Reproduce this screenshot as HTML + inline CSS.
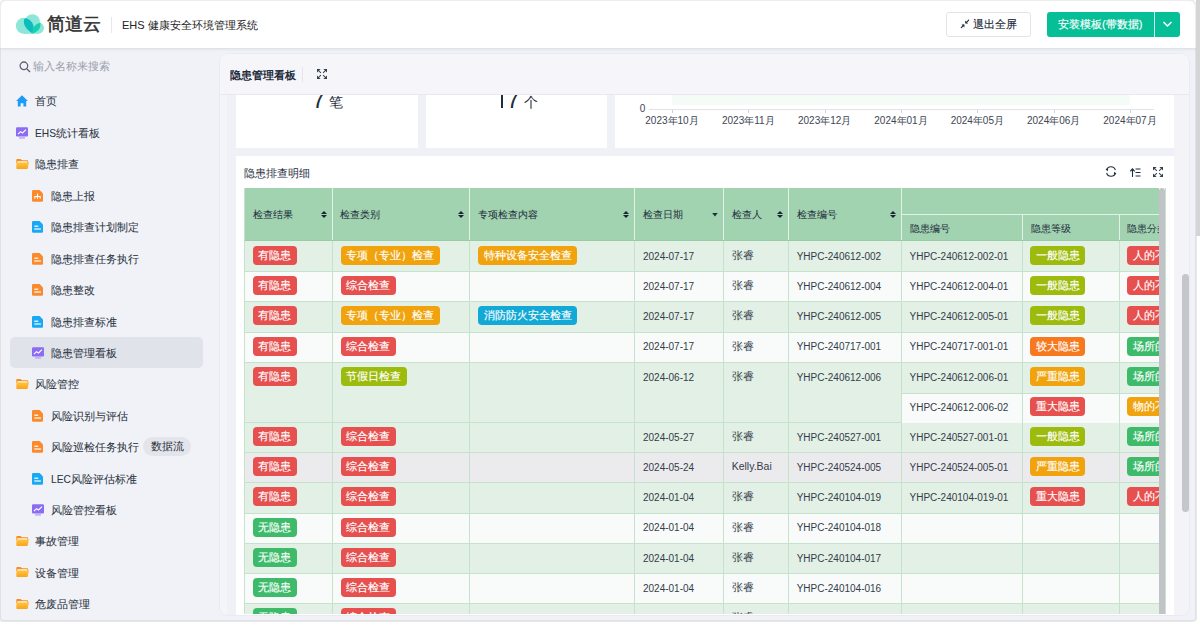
<!DOCTYPE html>
<html><head><meta charset="utf-8">
<style>
*{box-sizing:border-box;margin:0;padding:0}
html,body{width:1200px;height:624px;overflow:hidden;background:#fff;font-family:"Liberation Sans",sans-serif;color:#1f2d3d}
#win{position:absolute;left:0;top:0;width:1196px;height:620.7px;background:#f1f2f7;border-radius:6px 7px 3px 3px;overflow:hidden;box-shadow:0 0 0 1px #e9e9ec}
#pagebar{position:absolute;left:1196px;top:0;width:4px;height:236px;background:#d5d5d7}
#hdr{position:absolute;left:0;top:0;width:1197px;height:48px;background:#fff;box-shadow:0 1px 3px rgba(0,0,0,.1);z-index:2}
.abs{position:absolute}
#side .it{position:absolute;left:0;height:31px;width:210px;font-size:12px;line-height:31px;color:#1f2d3d;white-space:nowrap}
#side .it.top span.t{position:absolute;left:35px}
#side .it.sub span.t{position:absolute;left:51px}
#side .lbl{font-size:11px;line-height:18px;color:#2b3442;white-space:nowrap;-webkit-text-stroke:0.05px #2b3442}
.card{background:#fff}
.th{font-size:10px;line-height:14px;color:#253040;white-space:nowrap;-webkit-text-stroke:0.05px #253040}
.td{font-size:10px;line-height:13px;color:#343c49;white-space:nowrap}
.tdc{font-size:10.5px}
.tag{height:19px;line-height:19px;padding:0 5.5px;border-radius:4px;color:#fff;font-size:11px;white-space:nowrap;-webkit-text-stroke:0.15px #fff}
.sorti{width:6px;height:7.6px}.sorti::before{content:"";position:absolute;left:0;top:0;border-left:3px solid transparent;border-right:3px solid transparent;border-bottom:3.5px solid #1a2535}.sorti::after{content:"";position:absolute;left:0;top:4.1px;border-left:3px solid transparent;border-right:3px solid transparent;border-top:3.5px solid #1a2535}
.sortd{width:5.5px;height:3.6px;background:#1f2d3d;clip-path:polygon(0 0,100% 0,50% 100%)}
#main{position:absolute;left:220px;top:54px;width:969px;height:560.5px;background:#f4f5f9;border-radius:8px;overflow:hidden;box-shadow:0 0 0 1px #eaebf0}
</style></head><body>
<div id="win">
  <div id="hdr">
    <svg class="abs" style="left:0;top:0" width="50" height="40" viewBox="0 0 50 40">
      <g fill="#8de7d9"><circle cx="23.8" cy="25.8" r="8"/><circle cx="32.4" cy="21.9" r="7.6"/><circle cx="38.2" cy="28" r="5.8"/><rect x="23.8" y="24" width="14.4" height="9.8"/></g>
      <path d="M32.3 33.6 C28 30.5 23.8 26.8 23.8 21.8 C23.8 19.8 24.5 18.4 25.6 18 C30.5 19.6 33.6 23.2 33.6 27.4 C33.6 29.8 33 31.8 32.3 33.6 Z" fill="#0dbdbd"/>
      <path d="M32.3 33.6 C32.3 27.8 35.2 23.6 40.4 22.8 C41.2 28.6 37.6 32.2 32.3 33.6 Z" fill="#16d1b0"/>
    </svg>
    <div class="abs" style="left:46.5px;top:11.7px;font-size:18px;line-height:24px;color:#333;-webkit-text-stroke:0.55px #333">简道云</div>
    <div class="abs" style="left:111px;top:17px;width:1px;height:16px;background:#e8e8e8"></div>
    <div class="abs" style="left:122px;top:16.5px;font-size:11px;line-height:16px;color:#222">EHS 健康安全环境管理系统</div>
    <div class="abs" style="left:946px;top:12px;width:85px;height:25px;border:1px solid #e3e4e8;border-radius:3px;background:#fff"></div>
    <svg class="abs" style="left:958px;top:16px" width="14" height="14" viewBox="958 16 14 14"><path d="M968.7 20.2 L966.3 22.6 M961.3 27.6 L963.7 25.2" stroke="#1f2d3d" stroke-width="1.2" stroke-linecap="round"/><path d="M965.2 20.5 L965.2 23.4 L968.1 23.4 Z M964.4 27.5 L964.4 24.6 L961.5 24.6 Z" fill="#1f2d3d"/></svg>
    <div class="abs" style="left:973px;top:16px;font-size:11px;line-height:17px;color:#1f2d3d;-webkit-text-stroke:0.15px #1f2d3d">退出全屏</div>
    <div class="abs" style="left:1047px;top:12px;width:133px;height:25px;background:#07bf97;border-radius:3px"></div>
    <div class="abs" style="left:1154px;top:12px;width:1px;height:25px;background:#fff;opacity:.8"></div>
    <div class="abs" style="left:1058px;top:16px;font-size:11px;line-height:17px;color:#fff;-webkit-text-stroke:0.15px #fff">安装模板(带数据)</div>
    <svg class="abs" style="left:1162px;top:20px" width="11" height="8" viewBox="0 0 11 8"><path d="M1.5 2 L5.5 6 L9.5 2" stroke="#fff" stroke-width="1.5" fill="none"/></svg>
  </div>
  <div id="side">
<svg class="abs" style="left:18.5px;top:60.6px" width="12" height="12" viewBox="0 0 12 12"><circle cx="4.9" cy="4.8" r="3.8" stroke="#5e6675" stroke-width="1.3" fill="none"/><path d="M8 8 L11 11" stroke="#5e6675" stroke-width="1.4"/></svg><div class="abs" style="left:33px;top:57px;font-size:11px;line-height:18px;color:#9aa0ab">输入名称来搜索</div>
<svg class="abs" style="left:16px;top:95px" width="12" height="12" viewBox="0 0 12 12"><path d="M6 0.3 L11.9 5.9 L10.2 5.9 L10.2 11.6 L7.4 11.6 L7.4 8.2 L4.6 8.2 L4.6 11.6 L1.8 11.6 L1.8 5.9 L0.1 5.9 Z" fill="#1c9bf7"/></svg><div class="abs lbl" style="left:35px;top:92px">首页</div>
<svg class="abs" style="left:16px;top:126.5px" width="12" height="12" viewBox="0 0 12 12"><rect x="0" y="0.3" width="12" height="9.2" rx="1.2" fill="#8b6cf2"/><rect x="3" y="10.1" width="6" height="1.6" rx=".5" fill="#c3b3f8"/><path d="M2 7.2 L4.5 4.6 L6.5 6 L10 2.6" stroke="#fff" stroke-width="1.1" fill="none"/></svg><div class="abs lbl" style="left:35px;top:123.5px"><span style="font-size:10.2px">EHS</span>统计看板</div>
<svg class="abs" style="left:16px;top:158.8px" width="13" height="11" viewBox="0 0 13 11"><defs><linearGradient id="fg" x1="0" y1="0" x2="0" y2="1"><stop offset="0" stop-color="#fec53d"/><stop offset="1" stop-color="#f8a51b"/></linearGradient></defs><path d="M0.3 1 Q0.3 0 1.3 0 L4.6 0 L5.9 1.2 L11.2 1.2 Q12.2 1.2 12.2 2.2 L12.2 4 L0.3 4 Z" fill="#f98c1f"/><rect x="1.2" y="2.2" width="10.2" height="2" fill="#fff4dc"/><path d="M1.6 3.6 L12.8 3.6 L11.8 9.2 Q11.6 10 10.8 10 L1.2 10 Q0.3 10 0.3 9.1 L0.3 4.6 Z" fill="url(#fg)"/></svg><div class="abs lbl" style="left:35px;top:155px">隐患排查</div>
<svg class="abs" style="left:32px;top:189.5px" width="11" height="12" viewBox="0 0 11 12"><path d="M1.2 0 L7.6 0 L11 3.4 L11 10.6 Q11 11.8 9.8 11.8 L1.2 11.8 Q0 11.8 0 10.6 L0 1.2 Q0 0 1.2 0 Z" fill="#fb8a2c"/><path d="M5.5 3.5 V6.2 M2.8 8.8 V6.5 H8.2 V8.8 M5.5 6.5 V8.8" stroke="#fff" stroke-width="1.1" fill="none"/></svg><div class="abs lbl" style="left:51px;top:186.5px">隐患上报</div>
<svg class="abs" style="left:32px;top:221px" width="11" height="12" viewBox="0 0 11 12"><path d="M1.2 0 L7.6 0 L11 3.4 L11 10.6 Q11 11.8 9.8 11.8 L1.2 11.8 Q0 11.8 0 10.6 L0 1.2 Q0 0 1.2 0 Z" fill="#19a8f6"/><rect x="2.3" y="4.6" width="4" height="1.2" fill="#fff"/><rect x="2.3" y="7.4" width="6.6" height="1.2" fill="#fff"/></svg><div class="abs lbl" style="left:51px;top:218px">隐患排查计划制定</div>
<svg class="abs" style="left:32px;top:252.5px" width="11" height="12" viewBox="0 0 11 12"><path d="M1.2 0 L7.6 0 L11 3.4 L11 10.6 Q11 11.8 9.8 11.8 L1.2 11.8 Q0 11.8 0 10.6 L0 1.2 Q0 0 1.2 0 Z" fill="#fb8a2c"/><rect x="2.3" y="4.6" width="4" height="1.2" fill="#fff"/><rect x="2.3" y="7.4" width="6.6" height="1.2" fill="#fff"/></svg><div class="abs lbl" style="left:51px;top:249.5px">隐患排查任务执行</div>
<svg class="abs" style="left:32px;top:284px" width="11" height="12" viewBox="0 0 11 12"><path d="M1.2 0 L7.6 0 L11 3.4 L11 10.6 Q11 11.8 9.8 11.8 L1.2 11.8 Q0 11.8 0 10.6 L0 1.2 Q0 0 1.2 0 Z" fill="#fb8a2c"/><rect x="2.3" y="4.6" width="4" height="1.2" fill="#fff"/><rect x="2.3" y="7.4" width="6.6" height="1.2" fill="#fff"/></svg><div class="abs lbl" style="left:51px;top:281px">隐患整改</div>
<svg class="abs" style="left:32px;top:315.5px" width="11" height="12" viewBox="0 0 11 12"><path d="M1.2 0 L7.6 0 L11 3.4 L11 10.6 Q11 11.8 9.8 11.8 L1.2 11.8 Q0 11.8 0 10.6 L0 1.2 Q0 0 1.2 0 Z" fill="#19a8f6"/><rect x="2.3" y="4.6" width="4" height="1.2" fill="#fff"/><rect x="2.3" y="7.4" width="6.6" height="1.2" fill="#fff"/></svg><div class="abs lbl" style="left:51px;top:312.5px">隐患排查标准</div>
<div class="abs" style="left:10px;top:337px;width:193px;height:31px;background:#e1e3eb;border-radius:5px"></div><svg class="abs" style="left:32px;top:346.5px" width="12" height="12" viewBox="0 0 12 12"><rect x="0" y="0.3" width="12" height="9.2" rx="1.2" fill="#8b6cf2"/><rect x="3" y="10.1" width="6" height="1.6" rx=".5" fill="#c3b3f8"/><path d="M2 7.2 L4.5 4.6 L6.5 6 L10 2.6" stroke="#fff" stroke-width="1.1" fill="none"/></svg><div class="abs lbl" style="left:51px;top:343.5px">隐患管理看板</div>
<svg class="abs" style="left:16px;top:378.8px" width="13" height="11" viewBox="0 0 13 11"><defs><linearGradient id="fg" x1="0" y1="0" x2="0" y2="1"><stop offset="0" stop-color="#fec53d"/><stop offset="1" stop-color="#f8a51b"/></linearGradient></defs><path d="M0.3 1 Q0.3 0 1.3 0 L4.6 0 L5.9 1.2 L11.2 1.2 Q12.2 1.2 12.2 2.2 L12.2 4 L0.3 4 Z" fill="#f98c1f"/><rect x="1.2" y="2.2" width="10.2" height="2" fill="#fff4dc"/><path d="M1.6 3.6 L12.8 3.6 L11.8 9.2 Q11.6 10 10.8 10 L1.2 10 Q0.3 10 0.3 9.1 L0.3 4.6 Z" fill="url(#fg)"/></svg><div class="abs lbl" style="left:35px;top:375px">风险管控</div>
<svg class="abs" style="left:32px;top:409.5px" width="11" height="12" viewBox="0 0 11 12"><path d="M1.2 0 L7.6 0 L11 3.4 L11 10.6 Q11 11.8 9.8 11.8 L1.2 11.8 Q0 11.8 0 10.6 L0 1.2 Q0 0 1.2 0 Z" fill="#fb8a2c"/><rect x="2.3" y="4.6" width="4" height="1.2" fill="#fff"/><rect x="2.3" y="7.4" width="6.6" height="1.2" fill="#fff"/></svg><div class="abs lbl" style="left:51px;top:406.5px">风险识别与评估</div>
<svg class="abs" style="left:32px;top:441px" width="11" height="12" viewBox="0 0 11 12"><path d="M1.2 0 L7.6 0 L11 3.4 L11 10.6 Q11 11.8 9.8 11.8 L1.2 11.8 Q0 11.8 0 10.6 L0 1.2 Q0 0 1.2 0 Z" fill="#fb8a2c"/><rect x="2.3" y="4.6" width="4" height="1.2" fill="#fff"/><rect x="2.3" y="7.4" width="6.6" height="1.2" fill="#fff"/></svg><div class="abs lbl" style="left:51px;top:438px">风险巡检任务执行</div><div class="abs" style="left:143.3px;top:437.4px;width:48.2px;height:19px;border-radius:9.5px;background:#e4e5ea;font-size:11px;line-height:19px;text-align:center;color:#1f2d3d">数据流</div>
<svg class="abs" style="left:32px;top:472.5px" width="11" height="12" viewBox="0 0 11 12"><path d="M1.2 0 L7.6 0 L11 3.4 L11 10.6 Q11 11.8 9.8 11.8 L1.2 11.8 Q0 11.8 0 10.6 L0 1.2 Q0 0 1.2 0 Z" fill="#19a8f6"/><rect x="2.3" y="4.6" width="4" height="1.2" fill="#fff"/><rect x="2.3" y="7.4" width="6.6" height="1.2" fill="#fff"/></svg><div class="abs lbl" style="left:51px;top:469.5px"><span style="font-size:10.2px">LEC</span>风险评估标准</div>
<svg class="abs" style="left:32px;top:504px" width="12" height="12" viewBox="0 0 12 12"><rect x="0" y="0.3" width="12" height="9.2" rx="1.2" fill="#8b6cf2"/><rect x="3" y="10.1" width="6" height="1.6" rx=".5" fill="#c3b3f8"/><path d="M2 7.2 L4.5 4.6 L6.5 6 L10 2.6" stroke="#fff" stroke-width="1.1" fill="none"/></svg><div class="abs lbl" style="left:51px;top:501px">风险管控看板</div>
<svg class="abs" style="left:16px;top:535.8px" width="13" height="11" viewBox="0 0 13 11"><defs><linearGradient id="fg" x1="0" y1="0" x2="0" y2="1"><stop offset="0" stop-color="#fec53d"/><stop offset="1" stop-color="#f8a51b"/></linearGradient></defs><path d="M0.3 1 Q0.3 0 1.3 0 L4.6 0 L5.9 1.2 L11.2 1.2 Q12.2 1.2 12.2 2.2 L12.2 4 L0.3 4 Z" fill="#f98c1f"/><rect x="1.2" y="2.2" width="10.2" height="2" fill="#fff4dc"/><path d="M1.6 3.6 L12.8 3.6 L11.8 9.2 Q11.6 10 10.8 10 L1.2 10 Q0.3 10 0.3 9.1 L0.3 4.6 Z" fill="url(#fg)"/></svg><div class="abs lbl" style="left:35px;top:532px">事故管理</div>
<svg class="abs" style="left:16px;top:567.3px" width="13" height="11" viewBox="0 0 13 11"><defs><linearGradient id="fg" x1="0" y1="0" x2="0" y2="1"><stop offset="0" stop-color="#fec53d"/><stop offset="1" stop-color="#f8a51b"/></linearGradient></defs><path d="M0.3 1 Q0.3 0 1.3 0 L4.6 0 L5.9 1.2 L11.2 1.2 Q12.2 1.2 12.2 2.2 L12.2 4 L0.3 4 Z" fill="#f98c1f"/><rect x="1.2" y="2.2" width="10.2" height="2" fill="#fff4dc"/><path d="M1.6 3.6 L12.8 3.6 L11.8 9.2 Q11.6 10 10.8 10 L1.2 10 Q0.3 10 0.3 9.1 L0.3 4.6 Z" fill="url(#fg)"/></svg><div class="abs lbl" style="left:35px;top:563.5px">设备管理</div>
<svg class="abs" style="left:16px;top:598.8px" width="13" height="11" viewBox="0 0 13 11"><defs><linearGradient id="fg" x1="0" y1="0" x2="0" y2="1"><stop offset="0" stop-color="#fec53d"/><stop offset="1" stop-color="#f8a51b"/></linearGradient></defs><path d="M0.3 1 Q0.3 0 1.3 0 L4.6 0 L5.9 1.2 L11.2 1.2 Q12.2 1.2 12.2 2.2 L12.2 4 L0.3 4 Z" fill="#f98c1f"/><rect x="1.2" y="2.2" width="10.2" height="2" fill="#fff4dc"/><path d="M1.6 3.6 L12.8 3.6 L11.8 9.2 Q11.6 10 10.8 10 L1.2 10 Q0.3 10 0.3 9.1 L0.3 4.6 Z" fill="url(#fg)"/></svg><div class="abs lbl" style="left:35px;top:595px">危废品管理</div>
<!--endside--></div>
  <div id="main">
<div class="abs" style="left:0;top:0;width:969px;height:41px;background:#f5f5fa;border-bottom:1px solid #e8e9ef"></div>
<div class="abs" style="left:10px;top:12px;font-size:11px;line-height:18px;font-weight:bold;color:#1f2d3d">隐患管理看板</div>
<div class="abs" style="left:82px;top:13px;width:1px;height:15px;background:#e3e4ea"></div>
<svg class="abs" style="left:96.8px;top:14.8px" width="10" height="10" viewBox="0 0 10 10"><path d="M0 0 H3.6 L0 3.6 Z M10 0 H6.4 L10 3.6 Z M0 10 V6.4 L3.6 10 Z M10 10 V6.4 L6.4 10 Z" fill="#343e4c"/><path d="M1 1 L3.9 3.9 M9 1 L6.1 3.9 M1 9 L3.9 6.1 M9 9 L6.1 6.1" stroke="#343e4c" stroke-width="1.05"/></svg>
<div class="abs" style="left:7px;top:41px;width:962px;height:519.5px;background:#f0f1f6;overflow:hidden">
<div class="abs card" style="left:9px;top:-20px;width:182px;height:73px"></div>
<div class="abs card" style="left:198.5px;top:-20px;width:181.5px;height:73px"></div>
<div class="abs card" style="left:387.6px;top:-20px;width:559.4px;height:73px"></div>
<div class="abs" style="left:85px;top:-10.5px;width:50px;height:30px;font-size:24px;line-height:30px;color:#1f2d3d;white-space:nowrap">7<span style="font-size:14px;position:relative;top:-0.5px;left:4px">笔</span></div>
<div class="abs" style="left:273.6px;top:0;width:2.3px;height:12.599999999999994px;background:#1f2d3d"></div><div class="abs" style="left:279.5px;top:-10.5px;width:60px;height:30px;font-size:24px;line-height:30px;color:#1f2d3d;white-space:nowrap">7<span style="font-size:14px;position:relative;top:-0.5px;left:4px">个</span></div>
<div class="abs" style="left:445px;top:0;width:458px;height:9.5px;background:#f5fbf6"></div>
<div class="abs" style="left:422px;top:14px;width:505px;height:1px;background:#e0e3e8"></div>
<div class="abs" style="left:412.7px;top:8px;font-size:10px;line-height:12px;color:#3e4552">0</div>
<div class="abs" style="left:445.0px;top:15px;width:1px;height:3px;background:#d0d3d8"></div>
<div class="abs" style="left:405.0px;top:20.2px;width:80px;text-align:center;font-size:10px;line-height:12px;color:#3e4552">2023年10月</div>
<div class="abs" style="left:521.33px;top:15px;width:1px;height:3px;background:#d0d3d8"></div>
<div class="abs" style="left:481.33px;top:20.2px;width:80px;text-align:center;font-size:10px;line-height:12px;color:#3e4552">2023年11月</div>
<div class="abs" style="left:597.66px;top:15px;width:1px;height:3px;background:#d0d3d8"></div>
<div class="abs" style="left:557.66px;top:20.2px;width:80px;text-align:center;font-size:10px;line-height:12px;color:#3e4552">2023年12月</div>
<div class="abs" style="left:673.99px;top:15px;width:1px;height:3px;background:#d0d3d8"></div>
<div class="abs" style="left:633.99px;top:20.2px;width:80px;text-align:center;font-size:10px;line-height:12px;color:#3e4552">2024年01月</div>
<div class="abs" style="left:750.32px;top:15px;width:1px;height:3px;background:#d0d3d8"></div>
<div class="abs" style="left:710.32px;top:20.2px;width:80px;text-align:center;font-size:10px;line-height:12px;color:#3e4552">2024年05月</div>
<div class="abs" style="left:826.65px;top:15px;width:1px;height:3px;background:#d0d3d8"></div>
<div class="abs" style="left:786.65px;top:20.2px;width:80px;text-align:center;font-size:10px;line-height:12px;color:#3e4552">2024年06月</div>
<div class="abs" style="left:902.98px;top:15px;width:1px;height:3px;background:#d0d3d8"></div>
<div class="abs" style="left:862.98px;top:20.2px;width:80px;text-align:center;font-size:10px;line-height:12px;color:#3e4552">2024年07月</div>
<div class="abs card" style="left:9px;top:61px;width:938px;height:600px"></div>
<div class="abs" style="left:17px;top:68.5px;font-size:11px;line-height:18px;color:#1f2d3d">隐患排查明细</div>
<svg class="abs" style="left:878px;top:71px" width="12" height="11" viewBox="0 0 12 11"><path d="M1.5 4.2 A4.6 4.6 0 0 1 10.4 4.2 M10.5 6.8 A4.6 4.6 0 0 1 1.6 6.8" stroke="#1f2d3d" stroke-width="1.1" fill="none"/><path d="M0.5 3 L2.8 5.2 L3.2 2.6 Z M11.5 8 L9.2 5.8 L8.8 8.4 Z" fill="#1f2d3d"/></svg>
<svg class="abs" style="left:902.5px;top:72.5px" width="11" height="9" viewBox="0 0 11 9"><path d="M2.5 9 V1.5 M0.3 3.3 L2.5 0.8 L4.7 3.3 M5.5 1 H10.5 M5.5 4.5 H10.5 M5.5 8 H10.5" stroke="#1f2d3d" stroke-width="1.1" fill="none"/></svg>
<svg class="abs" style="left:926px;top:72px" width="10" height="10" viewBox="0 0 10 10"><path d="M0 0 H3.6 L0 3.6 Z M10 0 H6.4 L10 3.6 Z M0 10 V6.4 L3.6 10 Z M10 10 V6.4 L6.4 10 Z" fill="#343e4c"/><path d="M1 1 L3.9 3.9 M9 1 L6.1 3.9 M1 9 L3.9 6.1 M9 9 L6.1 6.1" stroke="#343e4c" stroke-width="1.05"/></svg>
<div class="abs" style="left:17.2px;top:93.3px;width:914.5px;height:426.2px;overflow:hidden">
<div class="abs" style="left:0;top:0;width:1000px;height:52.69999999999999px;background:#a2d3b0;border-bottom:1px solid #97cca5"></div>
<div class="abs th" style="left:8.8px;top:19.7px">检查结果</div>
<div class="abs sorti" style="left:76.5px;top:22.4px"></div>
<div class="abs th" style="left:96.3px;top:19.7px">检查类别</div>
<div class="abs" style="left:87.8px;top:0;width:1px;height:51.69999999999999px;background:#e3f2e7"></div>
<div class="abs sorti" style="left:213.8px;top:22.4px"></div>
<div class="abs th" style="left:233.6px;top:19.7px">专项检查内容</div>
<div class="abs" style="left:225.1px;top:0;width:1px;height:51.69999999999999px;background:#e3f2e7"></div>
<div class="abs sorti" style="left:378.7px;top:22.4px"></div>
<div class="abs th" style="left:398.5px;top:19.7px">检查日期</div>
<div class="abs" style="left:390.0px;top:0;width:1px;height:51.69999999999999px;background:#e3f2e7"></div>
<div class="abs sortd" style="left:468.0px;top:24.7px"></div>
<div class="abs th" style="left:487.5px;top:19.7px">检查人</div>
<div class="abs" style="left:479.0px;top:0;width:1px;height:51.69999999999999px;background:#e3f2e7"></div>
<div class="abs sorti" style="left:532.7px;top:22.4px"></div>
<div class="abs th" style="left:552.5px;top:19.7px">检查编号</div>
<div class="abs" style="left:544.0px;top:0;width:1px;height:51.69999999999999px;background:#e3f2e7"></div>
<div class="abs sorti" style="left:645.7px;top:22.4px"></div>
<div class="abs" style="left:657.0px;top:0;width:1px;height:51.69999999999999px;background:#e3f2e7"></div>
<div class="abs" style="left:657.0px;top:25.7px;width:400px;height:1px;background:#e3f2e7"></div>
<div class="abs th" style="left:665.5px;top:33.7px">隐患编号</div>
<div class="abs" style="left:778.0px;top:25.7px;width:1px;height:26.5px;background:#e3f2e7"></div>
<div class="abs th" style="left:786.5px;top:33.7px">隐患等级</div>
<div class="abs" style="left:874.8px;top:25.7px;width:1px;height:26.5px;background:#e3f2e7"></div>
<div class="abs th" style="left:883.3px;top:33.7px">隐患分类</div>
<div class="abs" style="left:0;top:52.7px;width:1000px;height:31.269999999999982px;background:#e2f0e5;border-bottom:1px solid #c5e3cc"></div>
<div class="abs" style="left:87.8px;top:52.7px;width:1px;height:31.269999999999982px;background:#c5e3cc"></div>
<div class="abs" style="left:225.1px;top:52.7px;width:1px;height:31.269999999999982px;background:#c5e3cc"></div>
<div class="abs" style="left:390.0px;top:52.7px;width:1px;height:31.269999999999982px;background:#c5e3cc"></div>
<div class="abs" style="left:479.0px;top:52.7px;width:1px;height:31.269999999999982px;background:#c5e3cc"></div>
<div class="abs" style="left:544.0px;top:52.7px;width:1px;height:31.269999999999982px;background:#c5e3cc"></div>
<div class="abs" style="left:657.0px;top:52.7px;width:1px;height:31.269999999999982px;background:#c5e3cc"></div>
<div class="abs tag" style="left:8.5px;top:57.7px;background:#e6514f">有隐患</div>
<div class="abs tag" style="left:96.5px;top:57.7px;background:#f0a30c">专项（专业）检查</div>
<div class="abs tag" style="left:234.1px;top:57.7px;background:#f0a30c">特种设备安全检查</div>
<div class="abs td" style="left:398.8px;top:61.6px">2024-07-17</div>
<div class="abs td tdc" style="left:487.5px;top:60.7px">张睿</div>
<div class="abs td" style="left:552.5px;top:61.6px">YHPC-240612-002</div>
<div class="abs td" style="left:665.3px;top:61.6px">YHPC-240612-002-01</div>
<div class="abs tag" style="left:786.3px;top:57.7px;background:#9dbb0c">一般隐患</div>
<div class="abs tag" style="left:883.3px;top:57.7px;background:#e6514f">人的不安全行为</div>
<div class="abs" style="left:778.0px;top:52.7px;width:1px;height:31.269999999999982px;background:#c5e3cc"></div>
<div class="abs" style="left:874.8px;top:52.7px;width:1px;height:31.269999999999982px;background:#c5e3cc"></div>
<div class="abs" style="left:0;top:83.97px;width:1000px;height:30.170000000000016px;background:#f8fbf9;border-bottom:1px solid #c5e3cc"></div>
<div class="abs" style="left:87.8px;top:83.97px;width:1px;height:30.170000000000016px;background:#c5e3cc"></div>
<div class="abs" style="left:225.1px;top:83.97px;width:1px;height:30.170000000000016px;background:#c5e3cc"></div>
<div class="abs" style="left:390.0px;top:83.97px;width:1px;height:30.170000000000016px;background:#c5e3cc"></div>
<div class="abs" style="left:479.0px;top:83.97px;width:1px;height:30.170000000000016px;background:#c5e3cc"></div>
<div class="abs" style="left:544.0px;top:83.97px;width:1px;height:30.170000000000016px;background:#c5e3cc"></div>
<div class="abs" style="left:657.0px;top:83.97px;width:1px;height:30.170000000000016px;background:#c5e3cc"></div>
<div class="abs tag" style="left:8.5px;top:87.87px;background:#e6514f">有隐患</div>
<div class="abs tag" style="left:96.5px;top:87.87px;background:#e6514f">综合检查</div>
<div class="abs td" style="left:398.8px;top:91.77px">2024-07-17</div>
<div class="abs td tdc" style="left:487.5px;top:90.87px">张睿</div>
<div class="abs td" style="left:552.5px;top:91.77px">YHPC-240612-004</div>
<div class="abs td" style="left:665.3px;top:91.77px">YHPC-240612-004-01</div>
<div class="abs tag" style="left:786.3px;top:87.87px;background:#9dbb0c">一般隐患</div>
<div class="abs tag" style="left:883.3px;top:87.87px;background:#e6514f">人的不安全行为</div>
<div class="abs" style="left:778.0px;top:83.97px;width:1px;height:30.170000000000016px;background:#c5e3cc"></div>
<div class="abs" style="left:874.8px;top:83.97px;width:1px;height:30.170000000000016px;background:#c5e3cc"></div>
<div class="abs" style="left:0;top:114.14px;width:1000px;height:30.170000000000016px;background:#e2f0e5;border-bottom:1px solid #c5e3cc"></div>
<div class="abs" style="left:87.8px;top:114.14px;width:1px;height:30.170000000000016px;background:#c5e3cc"></div>
<div class="abs" style="left:225.1px;top:114.14px;width:1px;height:30.170000000000016px;background:#c5e3cc"></div>
<div class="abs" style="left:390.0px;top:114.14px;width:1px;height:30.170000000000016px;background:#c5e3cc"></div>
<div class="abs" style="left:479.0px;top:114.14px;width:1px;height:30.170000000000016px;background:#c5e3cc"></div>
<div class="abs" style="left:544.0px;top:114.14px;width:1px;height:30.170000000000016px;background:#c5e3cc"></div>
<div class="abs" style="left:657.0px;top:114.14px;width:1px;height:30.170000000000016px;background:#c5e3cc"></div>
<div class="abs tag" style="left:8.5px;top:118.04px;background:#e6514f">有隐患</div>
<div class="abs tag" style="left:96.5px;top:118.04px;background:#f0a30c">专项（专业）检查</div>
<div class="abs tag" style="left:234.1px;top:118.04px;background:#12a9d6">消防防火安全检查</div>
<div class="abs td" style="left:398.8px;top:121.94px">2024-07-17</div>
<div class="abs td tdc" style="left:487.5px;top:121.04px">张睿</div>
<div class="abs td" style="left:552.5px;top:121.94px">YHPC-240612-005</div>
<div class="abs td" style="left:665.3px;top:121.94px">YHPC-240612-005-01</div>
<div class="abs tag" style="left:786.3px;top:118.04px;background:#9dbb0c">一般隐患</div>
<div class="abs tag" style="left:883.3px;top:118.04px;background:#e6514f">人的不安全行为</div>
<div class="abs" style="left:778.0px;top:114.14px;width:1px;height:30.170000000000016px;background:#c5e3cc"></div>
<div class="abs" style="left:874.8px;top:114.14px;width:1px;height:30.170000000000016px;background:#c5e3cc"></div>
<div class="abs" style="left:0;top:144.31px;width:1000px;height:30.16999999999996px;background:#f8fbf9;border-bottom:1px solid #c5e3cc"></div>
<div class="abs" style="left:87.8px;top:144.31px;width:1px;height:30.16999999999996px;background:#c5e3cc"></div>
<div class="abs" style="left:225.1px;top:144.31px;width:1px;height:30.16999999999996px;background:#c5e3cc"></div>
<div class="abs" style="left:390.0px;top:144.31px;width:1px;height:30.16999999999996px;background:#c5e3cc"></div>
<div class="abs" style="left:479.0px;top:144.31px;width:1px;height:30.16999999999996px;background:#c5e3cc"></div>
<div class="abs" style="left:544.0px;top:144.31px;width:1px;height:30.16999999999996px;background:#c5e3cc"></div>
<div class="abs" style="left:657.0px;top:144.31px;width:1px;height:30.16999999999996px;background:#c5e3cc"></div>
<div class="abs tag" style="left:8.5px;top:148.21px;background:#e6514f">有隐患</div>
<div class="abs tag" style="left:96.5px;top:148.21px;background:#e6514f">综合检查</div>
<div class="abs td" style="left:398.8px;top:152.11px">2024-07-17</div>
<div class="abs td tdc" style="left:487.5px;top:151.21px">张睿</div>
<div class="abs td" style="left:552.5px;top:152.11px">YHPC-240717-001</div>
<div class="abs td" style="left:665.3px;top:152.11px">YHPC-240717-001-01</div>
<div class="abs tag" style="left:786.3px;top:148.21px;background:#f7791f">较大隐患</div>
<div class="abs tag" style="left:883.3px;top:148.21px;background:#3dbb6a">场所的不安全</div>
<div class="abs" style="left:778.0px;top:144.31px;width:1px;height:30.16999999999996px;background:#c5e3cc"></div>
<div class="abs" style="left:874.8px;top:144.31px;width:1px;height:30.16999999999996px;background:#c5e3cc"></div>
<div class="abs" style="left:0;top:174.48px;width:1000px;height:60.34000000000003px;background:#e2f0e5;border-bottom:1px solid #c5e3cc"></div>
<div class="abs" style="left:87.8px;top:174.48px;width:1px;height:60.34000000000003px;background:#c5e3cc"></div>
<div class="abs" style="left:225.1px;top:174.48px;width:1px;height:60.34000000000003px;background:#c5e3cc"></div>
<div class="abs" style="left:390.0px;top:174.48px;width:1px;height:60.34000000000003px;background:#c5e3cc"></div>
<div class="abs" style="left:479.0px;top:174.48px;width:1px;height:60.34000000000003px;background:#c5e3cc"></div>
<div class="abs" style="left:544.0px;top:174.48px;width:1px;height:60.34000000000003px;background:#c5e3cc"></div>
<div class="abs" style="left:657.0px;top:174.48px;width:1px;height:60.34000000000003px;background:#c5e3cc"></div>
<div class="abs tag" style="left:8.5px;top:178.38px;background:#e6514f">有隐患</div>
<div class="abs tag" style="left:96.5px;top:178.38px;background:#9dbb0c">节假日检查</div>
<div class="abs td" style="left:398.8px;top:182.28px">2024-06-12</div>
<div class="abs td tdc" style="left:487.5px;top:181.38px">张睿</div>
<div class="abs td" style="left:552.5px;top:182.28px">YHPC-240612-006</div>
<div class="abs td" style="left:665.3px;top:182.28px">YHPC-240612-006-01</div>
<div class="abs tag" style="left:786.3px;top:178.38px;background:#f0a30c">严重隐患</div>
<div class="abs tag" style="left:883.3px;top:178.38px;background:#3dbb6a">场所的不安全</div>
<div class="abs" style="left:778.0px;top:174.48px;width:1px;height:30.170000000000016px;background:#c5e3cc"></div>
<div class="abs" style="left:874.8px;top:174.48px;width:1px;height:30.170000000000016px;background:#c5e3cc"></div>
<div class="abs" style="left:657.0px;top:204.65px;width:400px;height:30.170000000000016px;background:#f8fbf9;border-top:1px solid #c5e3cc"></div>
<div class="abs" style="left:657.0px;top:204.65px;width:1px;height:30.170000000000016px;background:#c5e3cc"></div>
<div class="abs td" style="left:665.3px;top:212.45px">YHPC-240612-006-02</div>
<div class="abs tag" style="left:786.3px;top:208.55px;background:#e6514f">重大隐患</div>
<div class="abs tag" style="left:883.3px;top:208.55px;background:#f0a30c">物的不安全</div>
<div class="abs" style="left:778.0px;top:204.65px;width:1px;height:30.170000000000016px;background:#c5e3cc"></div>
<div class="abs" style="left:874.8px;top:204.65px;width:1px;height:30.170000000000016px;background:#c5e3cc"></div>
<div class="abs" style="left:0;top:234.82px;width:1000px;height:30.170000000000016px;background:#e2f0e5;border-bottom:1px solid #c5e3cc"></div>
<div class="abs" style="left:87.8px;top:234.82px;width:1px;height:30.170000000000016px;background:#c5e3cc"></div>
<div class="abs" style="left:225.1px;top:234.82px;width:1px;height:30.170000000000016px;background:#c5e3cc"></div>
<div class="abs" style="left:390.0px;top:234.82px;width:1px;height:30.170000000000016px;background:#c5e3cc"></div>
<div class="abs" style="left:479.0px;top:234.82px;width:1px;height:30.170000000000016px;background:#c5e3cc"></div>
<div class="abs" style="left:544.0px;top:234.82px;width:1px;height:30.170000000000016px;background:#c5e3cc"></div>
<div class="abs" style="left:657.0px;top:234.82px;width:1px;height:30.170000000000016px;background:#c5e3cc"></div>
<div class="abs tag" style="left:8.5px;top:238.72px;background:#e6514f">有隐患</div>
<div class="abs tag" style="left:96.5px;top:238.72px;background:#e6514f">综合检查</div>
<div class="abs td" style="left:398.8px;top:242.62px">2024-05-27</div>
<div class="abs td tdc" style="left:487.5px;top:241.72px">张睿</div>
<div class="abs td" style="left:552.5px;top:242.62px">YHPC-240527-001</div>
<div class="abs td" style="left:665.3px;top:242.62px">YHPC-240527-001-01</div>
<div class="abs tag" style="left:786.3px;top:238.72px;background:#9dbb0c">一般隐患</div>
<div class="abs tag" style="left:883.3px;top:238.72px;background:#3dbb6a">场所的不安全</div>
<div class="abs" style="left:778.0px;top:234.82px;width:1px;height:30.170000000000016px;background:#c5e3cc"></div>
<div class="abs" style="left:874.8px;top:234.82px;width:1px;height:30.170000000000016px;background:#c5e3cc"></div>
<div class="abs" style="left:0;top:264.99px;width:1000px;height:30.16999999999996px;background:#ebebee;border-bottom:1px solid #c5e3cc"></div>
<div class="abs" style="left:87.8px;top:264.99px;width:1px;height:30.16999999999996px;background:#c5e3cc"></div>
<div class="abs" style="left:225.1px;top:264.99px;width:1px;height:30.16999999999996px;background:#c5e3cc"></div>
<div class="abs" style="left:390.0px;top:264.99px;width:1px;height:30.16999999999996px;background:#c5e3cc"></div>
<div class="abs" style="left:479.0px;top:264.99px;width:1px;height:30.16999999999996px;background:#c5e3cc"></div>
<div class="abs" style="left:544.0px;top:264.99px;width:1px;height:30.16999999999996px;background:#c5e3cc"></div>
<div class="abs" style="left:657.0px;top:264.99px;width:1px;height:30.16999999999996px;background:#c5e3cc"></div>
<div class="abs tag" style="left:8.5px;top:268.89px;background:#e6514f">有隐患</div>
<div class="abs tag" style="left:96.5px;top:268.89px;background:#e6514f">综合检查</div>
<div class="abs td" style="left:398.8px;top:272.79px">2024-05-24</div>
<div class="abs td tdc" style="left:487.5px;top:271.89px">Kelly.Bai</div>
<div class="abs td" style="left:552.5px;top:272.79px">YHPC-240524-005</div>
<div class="abs td" style="left:665.3px;top:272.79px">YHPC-240524-005-01</div>
<div class="abs tag" style="left:786.3px;top:268.89px;background:#f0a30c">严重隐患</div>
<div class="abs tag" style="left:883.3px;top:268.89px;background:#3dbb6a">场所的不安全</div>
<div class="abs" style="left:778.0px;top:264.99px;width:1px;height:30.16999999999996px;background:#c5e3cc"></div>
<div class="abs" style="left:874.8px;top:264.99px;width:1px;height:30.16999999999996px;background:#c5e3cc"></div>
<div class="abs" style="left:0;top:295.16px;width:1000px;height:30.170000000000016px;background:#e2f0e5;border-bottom:1px solid #c5e3cc"></div>
<div class="abs" style="left:87.8px;top:295.16px;width:1px;height:30.170000000000016px;background:#c5e3cc"></div>
<div class="abs" style="left:225.1px;top:295.16px;width:1px;height:30.170000000000016px;background:#c5e3cc"></div>
<div class="abs" style="left:390.0px;top:295.16px;width:1px;height:30.170000000000016px;background:#c5e3cc"></div>
<div class="abs" style="left:479.0px;top:295.16px;width:1px;height:30.170000000000016px;background:#c5e3cc"></div>
<div class="abs" style="left:544.0px;top:295.16px;width:1px;height:30.170000000000016px;background:#c5e3cc"></div>
<div class="abs" style="left:657.0px;top:295.16px;width:1px;height:30.170000000000016px;background:#c5e3cc"></div>
<div class="abs tag" style="left:8.5px;top:299.06px;background:#e6514f">有隐患</div>
<div class="abs tag" style="left:96.5px;top:299.06px;background:#e6514f">综合检查</div>
<div class="abs td" style="left:398.8px;top:302.96px">2024-01-04</div>
<div class="abs td tdc" style="left:487.5px;top:302.06px">张睿</div>
<div class="abs td" style="left:552.5px;top:302.96px">YHPC-240104-019</div>
<div class="abs td" style="left:665.3px;top:302.96px">YHPC-240104-019-01</div>
<div class="abs tag" style="left:786.3px;top:299.06px;background:#e6514f">重大隐患</div>
<div class="abs tag" style="left:883.3px;top:299.06px;background:#e6514f">人的不安全行为</div>
<div class="abs" style="left:778.0px;top:295.16px;width:1px;height:30.170000000000016px;background:#c5e3cc"></div>
<div class="abs" style="left:874.8px;top:295.16px;width:1px;height:30.170000000000016px;background:#c5e3cc"></div>
<div class="abs" style="left:0;top:325.33px;width:1000px;height:30.16999999999996px;background:#f8fbf9;border-bottom:1px solid #c5e3cc"></div>
<div class="abs" style="left:87.8px;top:325.33px;width:1px;height:30.16999999999996px;background:#c5e3cc"></div>
<div class="abs" style="left:225.1px;top:325.33px;width:1px;height:30.16999999999996px;background:#c5e3cc"></div>
<div class="abs" style="left:390.0px;top:325.33px;width:1px;height:30.16999999999996px;background:#c5e3cc"></div>
<div class="abs" style="left:479.0px;top:325.33px;width:1px;height:30.16999999999996px;background:#c5e3cc"></div>
<div class="abs" style="left:544.0px;top:325.33px;width:1px;height:30.16999999999996px;background:#c5e3cc"></div>
<div class="abs" style="left:657.0px;top:325.33px;width:1px;height:30.16999999999996px;background:#c5e3cc"></div>
<div class="abs tag" style="left:8.5px;top:329.23px;background:#3dbb6a">无隐患</div>
<div class="abs tag" style="left:96.5px;top:329.23px;background:#e6514f">综合检查</div>
<div class="abs td" style="left:398.8px;top:333.13px">2024-01-04</div>
<div class="abs td tdc" style="left:487.5px;top:332.23px">张睿</div>
<div class="abs td" style="left:552.5px;top:333.13px">YHPC-240104-018</div>
<div class="abs" style="left:778.0px;top:325.33px;width:1px;height:30.16999999999996px;background:#c5e3cc"></div>
<div class="abs" style="left:874.8px;top:325.33px;width:1px;height:30.16999999999996px;background:#c5e3cc"></div>
<div class="abs" style="left:0;top:355.5px;width:1000px;height:30.170000000000073px;background:#e2f0e5;border-bottom:1px solid #c5e3cc"></div>
<div class="abs" style="left:87.8px;top:355.5px;width:1px;height:30.170000000000073px;background:#c5e3cc"></div>
<div class="abs" style="left:225.1px;top:355.5px;width:1px;height:30.170000000000073px;background:#c5e3cc"></div>
<div class="abs" style="left:390.0px;top:355.5px;width:1px;height:30.170000000000073px;background:#c5e3cc"></div>
<div class="abs" style="left:479.0px;top:355.5px;width:1px;height:30.170000000000073px;background:#c5e3cc"></div>
<div class="abs" style="left:544.0px;top:355.5px;width:1px;height:30.170000000000073px;background:#c5e3cc"></div>
<div class="abs" style="left:657.0px;top:355.5px;width:1px;height:30.170000000000073px;background:#c5e3cc"></div>
<div class="abs tag" style="left:8.5px;top:359.4px;background:#3dbb6a">无隐患</div>
<div class="abs tag" style="left:96.5px;top:359.4px;background:#e6514f">综合检查</div>
<div class="abs td" style="left:398.8px;top:363.3px">2024-01-04</div>
<div class="abs td tdc" style="left:487.5px;top:362.4px">张睿</div>
<div class="abs td" style="left:552.5px;top:363.3px">YHPC-240104-017</div>
<div class="abs" style="left:778.0px;top:355.5px;width:1px;height:30.170000000000073px;background:#c5e3cc"></div>
<div class="abs" style="left:874.8px;top:355.5px;width:1px;height:30.170000000000073px;background:#c5e3cc"></div>
<div class="abs" style="left:0;top:385.67px;width:1000px;height:30.16999999999996px;background:#f8fbf9;border-bottom:1px solid #c5e3cc"></div>
<div class="abs" style="left:87.8px;top:385.67px;width:1px;height:30.16999999999996px;background:#c5e3cc"></div>
<div class="abs" style="left:225.1px;top:385.67px;width:1px;height:30.16999999999996px;background:#c5e3cc"></div>
<div class="abs" style="left:390.0px;top:385.67px;width:1px;height:30.16999999999996px;background:#c5e3cc"></div>
<div class="abs" style="left:479.0px;top:385.67px;width:1px;height:30.16999999999996px;background:#c5e3cc"></div>
<div class="abs" style="left:544.0px;top:385.67px;width:1px;height:30.16999999999996px;background:#c5e3cc"></div>
<div class="abs" style="left:657.0px;top:385.67px;width:1px;height:30.16999999999996px;background:#c5e3cc"></div>
<div class="abs tag" style="left:8.5px;top:389.57px;background:#3dbb6a">无隐患</div>
<div class="abs tag" style="left:96.5px;top:389.57px;background:#e6514f">综合检查</div>
<div class="abs td" style="left:398.8px;top:393.47px">2024-01-04</div>
<div class="abs td tdc" style="left:487.5px;top:392.57px">张睿</div>
<div class="abs td" style="left:552.5px;top:393.47px">YHPC-240104-016</div>
<div class="abs" style="left:778.0px;top:385.67px;width:1px;height:30.16999999999996px;background:#c5e3cc"></div>
<div class="abs" style="left:874.8px;top:385.67px;width:1px;height:30.16999999999996px;background:#c5e3cc"></div>
<div class="abs" style="left:0;top:415.84px;width:1000px;height:30.16999999999996px;background:#e2f0e5;border-bottom:1px solid #c5e3cc"></div>
<div class="abs" style="left:87.8px;top:415.84px;width:1px;height:30.16999999999996px;background:#c5e3cc"></div>
<div class="abs" style="left:225.1px;top:415.84px;width:1px;height:30.16999999999996px;background:#c5e3cc"></div>
<div class="abs" style="left:390.0px;top:415.84px;width:1px;height:30.16999999999996px;background:#c5e3cc"></div>
<div class="abs" style="left:479.0px;top:415.84px;width:1px;height:30.16999999999996px;background:#c5e3cc"></div>
<div class="abs" style="left:544.0px;top:415.84px;width:1px;height:30.16999999999996px;background:#c5e3cc"></div>
<div class="abs" style="left:657.0px;top:415.84px;width:1px;height:30.16999999999996px;background:#c5e3cc"></div>
<div class="abs tag" style="left:8.5px;top:419.74px;background:#3dbb6a">无隐患</div>
<div class="abs tag" style="left:96.5px;top:419.74px;background:#e6514f">综合检查</div>
<div class="abs td" style="left:398.8px;top:423.64px">2023-12-19</div>
<div class="abs td tdc" style="left:487.5px;top:422.74px">张睿</div>
<div class="abs td" style="left:552.5px;top:423.64px">YHPC-240104-015</div>
<div class="abs" style="left:778.0px;top:415.84px;width:1px;height:30.16999999999996px;background:#c5e3cc"></div>
<div class="abs" style="left:874.8px;top:415.84px;width:1px;height:30.16999999999996px;background:#c5e3cc"></div>
<div class="abs" style="left:0;top:0;width:1px;height:600px;background:#c5e3cc"></div>
</div>
<div class="abs" style="left:931.7px;top:93.3px;width:6.7px;height:426.2px;background:#c1c3c9;border-radius:3px 3px 0 0"></div>
<div class="abs" style="left:938.4px;top:93.3px;width:1px;height:426.2px;background:#c5e3cc"></div>
<div class="abs" style="left:947px;top:0;width:15px;height:600px;background:#f3f3f8"></div>
<div class="abs" style="left:955px;top:179px;width:6.5px;height:238px;background:#c4c6cc;border-radius:3.5px"></div>
</div>
<!--endmain--></div>
</div>
<div id="pagebar"></div>
<div style="position:absolute;left:0;top:0;width:1196px;height:620.7px;border:1px solid rgba(0,0,0,.07);border-radius:6px 7px 3px 3px;pointer-events:none;z-index:5"></div>
</body></html>
